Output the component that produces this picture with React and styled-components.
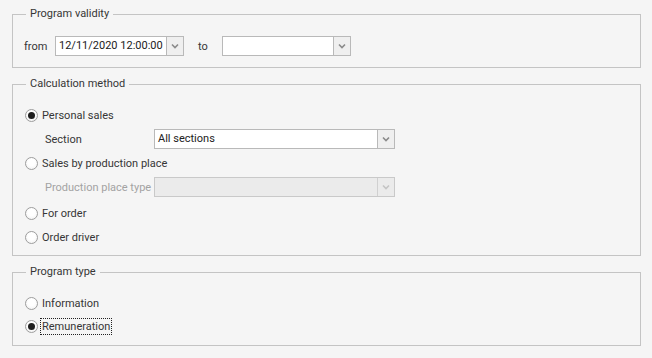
import React from "react";
import styled, { createGlobalStyle } from "styled-components";

const colors = {
  page: "#f5f5f5",
  frame: "#c4c4c4",
  text: "#363636",
  muted: "#a3a3a3",
  edit: "#b9b9b9",
  button: "#efefef",
  disabled: "#ebebeb",
};

const GlobalStyle = createGlobalStyle`
  html, body {
    margin: 0;
    background: ${colors.page};
  }
  body {
    font-family: Roboto, "Liberation Sans", Arial, sans-serif;
    font-size: 11px;
    color: ${colors.text};
  }
`;

// - - - - - - - - - - -
// page and group boxes
const Page = styled.div`
  display: flex;
  flex-direction: column;
  gap: 9px;
  width: 629px;
  padding: 7px 0 0 12px;
`;

const Group = styled.fieldset`
  margin: 0;
  min-width: 0;
  border: 1px solid ${colors.frame};
  padding: 0;
`;

const Legend = styled.legend`
  margin-left: 13px;
  padding: 0 4px;
  height: 14px;
  line-height: 14px;
`;

// - inner content of a group
const GroupBody = styled.div`
  display: flex;
  flex-direction: column;
  gap: ${(props) => props.gap || 4}px;
  padding: ${(props) => props.padTop || 14}px ${(props) => props.padX || 12}px
    ${(props) => props.padBottom || 8}px;
`;

// - - - - - - - - - - -
// rows
const Row = styled.div`
  display: flex;
  align-items: center;
  height: 20px;
  padding-left: ${(props) => props.indent || 0}px;
  margin-top: ${(props) => props.mt || 0}px;
`;

const Label = styled.span`
  width: ${(props) => (props.w ? `${props.w}px` : "auto")};
  flex-shrink: 0;
  color: ${(props) => (props.disabled ? colors.muted : colors.text)};
  white-space: nowrap;
`;

// - - - - - - - - - - -
// combo box
const Combo = styled.div`
  display: flex;
  flex-shrink: 0;
  width: ${(props) => props.w}px;
  height: 20px;
  box-sizing: border-box;
  border: 1px solid ${(props) => (props.disabled ? "#c9c9c9" : colors.edit)};
  background: ${(props) => (props.disabled ? colors.disabled : "#ffffff")};
  margin-right: ${(props) => props.mr || 0}px;
`;

const ComboText = styled.div`
  flex: 1;
  padding-left: 3px;
  line-height: 18px;
  color: #222;
  white-space: nowrap;
  overflow: hidden;
`;

const ComboButton = styled.div`
  width: 16px;
  display: flex;
  align-items: center;
  justify-content: center;
  border-left: 1px solid ${(props) => (props.disabled ? "#d0d0d0" : colors.edit)};
  background: ${(props) => (props.disabled ? colors.disabled : colors.button)};
  svg {
    display: block;
  }
`;

const Chevron = ({ disabled }) => (
  <svg width="8" height="6" viewBox="0 0 8 6">
    <path
      d="M1 1.5 L4 4.5 L7 1.5"
      fill="none"
      stroke={disabled ? "#c4c4c4" : "#8a8a8a"}
      strokeWidth="1.6"
    />
  </svg>
);

const ComboBox = ({ w, value, disabled, mr }) => (
  <Combo w={w} disabled={disabled} mr={mr}>
    <ComboText>{value}</ComboText>
    <ComboButton disabled={disabled}>
      <Chevron disabled={disabled} />
    </ComboButton>
  </Combo>
);

// - - - - - - - - - - -
// radio button
const RadioCircle = styled.span`
  width: 13px;
  height: 13px;
  box-sizing: border-box;
  border-radius: 50%;
  border: 1px solid #9d9d9d;
  background: radial-gradient(circle at 50% 40%, #ffffff 40%, #ececec 100%);
  display: flex;
  align-items: center;
  justify-content: center;
  margin-right: 3px;
  flex-shrink: 0;
  &::after {
    content: "";
    width: 7px;
    height: 7px;
    border-radius: 50%;
    background: #1e1e1e;
    display: ${(props) => (props.checked ? "block" : "none")};
  }
`;

const RadioText = styled.span`
  line-height: 15px;
  padding: 0 1px;
  margin-left: -1px;
  border: 1px dotted ${(props) => (props.focused ? "#222" : "transparent")};
`;

const Radio = ({ label, checked, focused, mt }) => (
  <Row mt={mt}>
    <RadioCircle checked={checked} />
    <RadioText focused={focused}>{label}</RadioText>
  </Row>
);

export default function App() {
  return (
    <>
      <GlobalStyle />
      <Page>
        <Group>
          <Legend>Program validity</Legend>
          <GroupBody padX={11} padTop={15} padBottom={11}>
            <Row>
              <Label w={31}>from</Label>
              <ComboBox w={129} value="12/11/2020 12:00:00" mr={14} />
              <Label w={24}>to</Label>
              <ComboBox w={129} value="" />
            </Row>
          </GroupBody>
        </Group>

        <Group>
          <Legend>Calculation method</Legend>
          <GroupBody padBottom={8}>
            <Radio label="Personal sales" checked />
            <Row indent={20}>
              <Label w={109}>Section</Label>
              <ComboBox w={241} value="All sections" />
            </Row>
            <Radio label="Sales by production place" />
            <Row indent={20}>
              <Label w={109} disabled>
                Production place type
              </Label>
              <ComboBox w={241} value="" disabled />
            </Row>
            <Radio label="For order" mt={2} />
            <Radio label="Order driver" />
          </GroupBody>
        </Group>

        <Group>
          <Legend>Program type</Legend>
          <GroupBody gap={3} padBottom={9}>
            <Radio label="Information" />
            <Radio label="Remuneration" checked focused />
          </GroupBody>
        </Group>
      </Page>
    </>
  );
}
